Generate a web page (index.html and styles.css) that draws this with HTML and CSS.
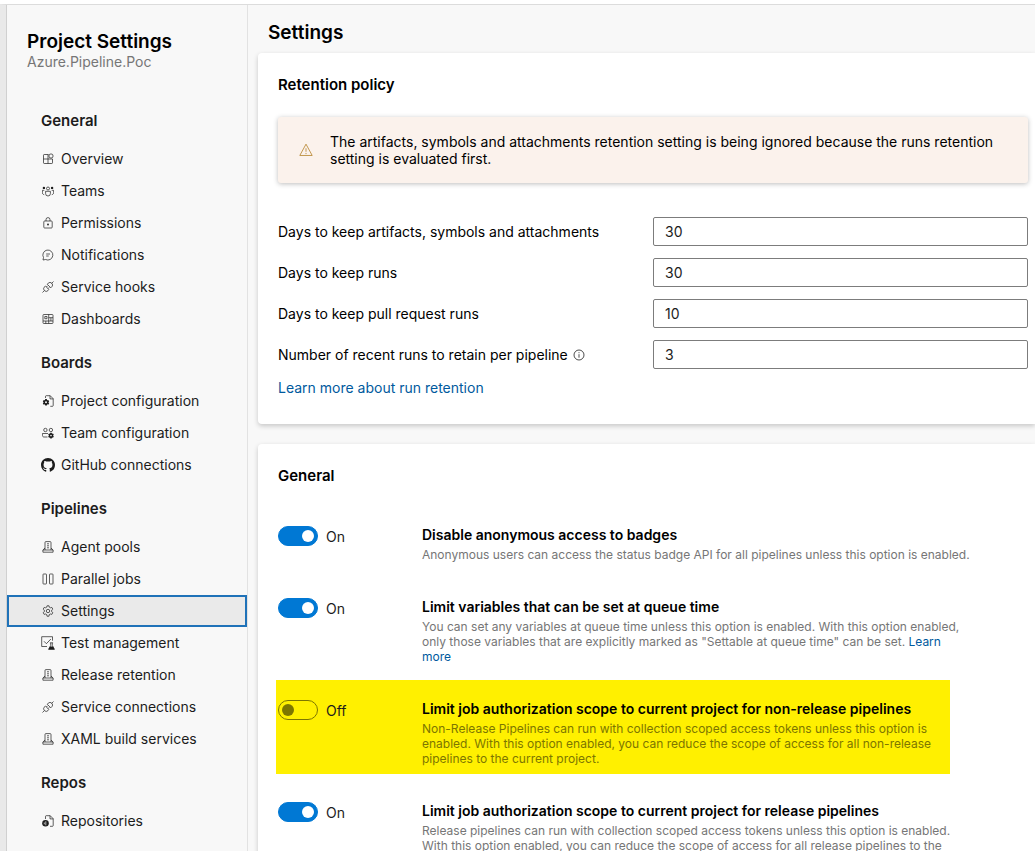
FILE: index.html
```html
<!DOCTYPE html>
<html lang="en">
<head>
<meta charset="utf-8">
<meta name="viewport" content="width=device-width, initial-scale=1">
<title>Project Settings - Azure.Pipeline.Poc</title>
<link rel="stylesheet" href="styles.css">
</head>
<body>
<svg class="sprite" aria-hidden="true">
  <symbol id="overview" viewBox="0 0 12 12"><path d="M6.500 1.500H2.200a.7.7 0 0 0-.7.7v7.600c0 .4.3.7.7.7h7.600a.7.7 0 0 0 .7-.7V6M6 1.500v9M1.500 6h9"/><circle cx="9" cy="3" r="2.100"/></symbol>
  <symbol id="teams" viewBox="0 0 12 12"><circle cx="6" cy="3.500" r="1.500"/><path d="M3.600 6.300h4.800v2.300a2.400 2.400 0 0 1-4.800 0zM2.300 5.300H.4v2.400c0 1 .6 1.800 1.800 2M9.700 5.300h1.900v2.400c0 1-.6 1.800-1.800 2"/><circle class="solid" cx="1.900" cy="2.900" r="1.200"/><circle class="solid" cx="10.100" cy="2.900" r="1.200"/></symbol>
  <symbol id="lock" viewBox="0 0 12 12"><rect x="1.800" y="4" width="8.400" height="7" rx=".8"/><path d="M4 4V2.600a2 2 0 0 1 4 0V4"/><circle class="solid" cx="6" cy="7.500" r=".9"/></symbol>
  <symbol id="chat" viewBox="0 0 12 12"><path d="M1 11l.5-2.500A5 5 0 1 1 3.600 10.500zM4.200 5h3.800M4.200 7h2.500"/></symbol>
  <symbol id="plug" viewBox="0 0 12 12"><path d="M.5 11.500l1.800-1.800M9.700 2.300L11.500.5M3.400 5l3.600 3.600-1 1a2.500 2.500 0 0 1-3.600-3.600zM5.200 3.200l1-1a2.500 2.500 0 0 1 3.600 3.600l-1 1zM4.400 6l1.300-1.300M6 7.600l1.300-1.300"/></symbol>
  <symbol id="dashboard" viewBox="0 0 12 12"><rect x="1" y="1.500" width="10" height="9" rx=".8"/><path d="M6.700 1.500v9M1 8h10M6.700 4.700H11M2.800 3.500h2.200v2.200H2.800zM3.800 8v2.500M8.900 4.700V8"/></symbol>
  <symbol id="file-gear" viewBox="0 0 12 12"><path d="M3.500 3V1.400c0-.4.300-.7.700-.7H8.200l3 3v6.900c0 .4-.3.700-.7.700H8.300M8 .7v3.200h3.200"/><path class="solid" d="M3.200 4.100h1.600l.3 1.200 1.200-.4.900 1.500-.9.900.9.900-.9 1.500-1.200-.4-.3 1.300H3.200l-.3-1.300-1.200.4-.9-1.500.9-.9-.9-.9.900-1.500 1.200.4z"/><circle class="hole" cx="4" cy="7.300" r="1"/></symbol>
  <symbol id="team-gear" viewBox="0 0 12 12"><circle cx="3.400" cy="3" r="1.700"/><circle cx="8.900" cy="3" r="1.700"/><path d="M5.500 10H2C1 10 .4 9.300.4 8.300V6.500H6"/><path class="solid" d="M8.300 5.800h1.400l.3 1 1-.3.800 1.300-.8.800.8.800-.8 1.300-1-.3-.3 1H8.300l-.3-1-1 .3-.8-1.300.8-.8-.8-.8.800-1.300 1 .3z"/><circle class="hole" cx="9" cy="8.600" r=".8"/></symbol>
  <symbol id="github" viewBox="0 0 16 16"><path class="solid" d="M8 0C3.580 0 0 3.580 0 8c0 3.540 2.290 6.530 5.470 7.590.4.070.55-.17.55-.38 0-.19-.01-.82-.01-1.490-2.010.37-2.530-.49-2.690-.94-.09-.23-.48-.94-.82-1.130-.28-.15-.68-.52-.01-.53.63-.01 1.080.58 1.230.82.72 1.210 1.870.87 2.330.66.07-.52.28-.87.51-1.070-1.780-.2-3.640-.89-3.640-3.950 0-.87.31-1.590.82-2.150-.08-.2-.36-1.020.08-2.120 0 0 .67-.21 2.200.82a7.600 7.600 0 0 1 4 0c1.530-1.040 2.200-.82 2.200-.82.44 1.100.16 1.920.08 2.120.51.56.82 1.270.82 2.150 0 3.070-1.870 3.750-3.650 3.950.29.25.54.73.54 1.480 0 1.070-.01 1.930-.01 2.200 0 .21.150.46.55.38A8.010 8.010 0 0 0 16 8c0-4.420-3.580-8-8-8z"/></symbol>
  <symbol id="server" viewBox="0 0 12 12"><path d="M3 9V1.500c0-.6.300-.9.900-.9h4.200c.6 0 .9.300.9.900V9M3 7L.9 9v2.200h10.200V9L9 7M.9 9h10.200M5 2.800h2M5 4.800h2M5 6.800h2"/></symbol>
  <symbol id="parallel" viewBox="0 0 12 12"><rect x="1" y="1" width="3.500" height="10" rx=".6"/><rect x="7.500" y="1" width="3.500" height="10" rx=".6"/></symbol>
  <symbol id="gear" viewBox="0 0 12 12"><path d="M4.700 2.200L5 .8h2l.3 1.400 1.100.6 1.400-.4 1 1.700-1.100 1v1.600l1.100 1-1 1.700-1.400-.4-1.100.6L7 11.200H5l-.3-1.600L3.600 9l-1.400.4-1-1.700 1.100-1V5.100l-1.100-1 1-1.700 1.400.4z"/><circle cx="6" cy="6" r="1.700"/></symbol>
  <symbol id="test" viewBox="0 0 14 14"><path d="M6 10.500H.7V.7h10.800v4M3 5.300l2.400 2.400 4.500-4.700"/><path d="M9.700 7v2.500l-2 3.800h5.600l-2-3.800V7M8.900 6.800h3.200"/><path class="solid" d="M8.900 10.500h3.200l1.600 3.100H7.300z"/></symbol>
  <symbol id="repo" viewBox="0 0 12 12"><path d="M3.500 4V1.400c0-.4.300-.7.700-.7H8.200l3 3v6.900c0 .4-.3.700-.7.700H8M8 .7v3.200h3.200"/><circle class="solid" cx="3.500" cy="8.300" r="3.300"/><path class="line-light" d="M3.800 6.300v4M2.300 7.500v1.800"/></symbol>
  <symbol id="warning" viewBox="0 0 12 12"><path d="M6 1L11.300 10.700H.7zM6 4.500v3M6 8.500v1"/></symbol>
  <symbol id="info" viewBox="0 0 12 12"><circle cx="6" cy="6" r="5"/><path d="M6 5.200v3.500M6 3.200v1"/></symbol>
</svg>

<div class="app">
  <nav class="sidebar" aria-label="Project settings">
    <header class="sidebar-header">
      <h2 class="page-title">Project Settings</h2>
      <p class="project-name">Azure.Pipeline.Poc</p>
    </header>

    <h3 class="nav-heading">General</h3>
    <a class="nav-item" href="#"><svg class="icon"><use href="#overview"/></svg>Overview</a>
    <a class="nav-item" href="#"><svg class="icon"><use href="#teams"/></svg>Teams</a>
    <a class="nav-item" href="#"><svg class="icon"><use href="#lock"/></svg>Permissions</a>
    <a class="nav-item" href="#"><svg class="icon"><use href="#chat"/></svg>Notifications</a>
    <a class="nav-item" href="#"><svg class="icon"><use href="#plug"/></svg>Service hooks</a>
    <a class="nav-item" href="#"><svg class="icon"><use href="#dashboard"/></svg>Dashboards</a>

    <h3 class="nav-heading">Boards</h3>
    <a class="nav-item" href="#"><svg class="icon"><use href="#file-gear"/></svg>Project configuration</a>
    <a class="nav-item" href="#"><svg class="icon"><use href="#team-gear"/></svg>Team configuration</a>
    <a class="nav-item" href="#"><svg class="icon icon-large"><use href="#github"/></svg>GitHub connections</a>

    <h3 class="nav-heading">Pipelines</h3>
    <a class="nav-item" href="#"><svg class="icon"><use href="#server"/></svg>Agent pools</a>
    <a class="nav-item" href="#"><svg class="icon"><use href="#parallel"/></svg>Parallel jobs</a>
    <a class="nav-item selected" href="#" aria-current="page"><svg class="icon"><use href="#gear"/></svg>Settings</a>
    <a class="nav-item" href="#"><svg class="icon icon-large"><use href="#test"/></svg>Test management</a>
    <a class="nav-item" href="#"><svg class="icon"><use href="#server"/></svg>Release retention</a>
    <a class="nav-item" href="#"><svg class="icon"><use href="#plug"/></svg>Service connections</a>
    <a class="nav-item" href="#"><svg class="icon"><use href="#server"/></svg>XAML build services</a>

    <h3 class="nav-heading">Repos</h3>
    <a class="nav-item" href="#"><svg class="icon"><use href="#repo"/></svg>Repositories</a>
  </nav>

  <main class="content">
    <h1 class="page-title content-title">Settings</h1>

    <section class="card">
      <h2 class="card-title">Retention policy</h2>
      <div class="alert" role="alert">
        <svg class="icon alert-icon"><use href="#warning"/></svg>
        <p class="alert-text">The artifacts, symbols and attachments retention setting is being ignored because the runs retention setting is evaluated first.</p>
      </div>
      <form class="fields">
        <label for="keep-artifacts">Days to keep artifacts, symbols and attachments</label>
        <input class="field-input" id="keep-artifacts" type="text" value="30">
        <label for="keep-runs">Days to keep runs</label>
        <input class="field-input" id="keep-runs" type="text" value="30">
        <label for="keep-pr">Days to keep pull request runs</label>
        <input class="field-input" id="keep-pr" type="text" value="10">
        <label class="label-info" for="recent-runs">Number of recent runs to retain per pipeline <svg class="icon"><use href="#info"/></svg></label>
        <input class="field-input" id="recent-runs" type="text" value="3">
      </form>
      <a class="link card-link" href="#">Learn more about run retention</a>
    </section>

    <section class="card">
      <h2 class="card-title">General</h2>
      <div class="options">
        <div class="option">
          <div class="toggle-cell"><input class="toggle" id="opt-badges" type="checkbox" role="switch" checked aria-describedby="t-badges"><label class="toggle-label" for="opt-badges">On</label></div>
          <div>
            <h3 class="option-title" id="t-badges">Disable anonymous access to badges</h3>
            <p class="option-text">Anonymous users can access the status badge API for all pipelines unless this option is enabled.</p>
          </div>
        </div>
        <div class="option">
          <div class="toggle-cell"><input class="toggle" id="opt-vars" type="checkbox" role="switch" checked aria-describedby="t-vars"><label class="toggle-label" for="opt-vars">On</label></div>
          <div>
            <h3 class="option-title" id="t-vars">Limit variables that can be set at queue time</h3>
            <p class="option-text">You can set any variables at queue time unless this option is enabled. With this option enabled, only those variables that are explicitly marked as "Settable at queue time" can be set. <a class="link" href="#">Learn more</a></p>
          </div>
        </div>
        <div class="option highlighted">
          <div class="toggle-cell"><input class="toggle" id="opt-nonrelease" type="checkbox" role="switch" aria-describedby="t-nonrelease"><label class="toggle-label" for="opt-nonrelease">Off</label></div>
          <div>
            <h3 class="option-title" id="t-nonrelease">Limit job authorization scope to current project for non-release pipelines</h3>
            <p class="option-text">Non-Release Pipelines can run with collection scoped access tokens unless this option is enabled. With this option enabled, you can reduce the scope of access for all non-release pipelines to the current project.</p>
          </div>
        </div>
        <div class="option">
          <div class="toggle-cell"><input class="toggle" id="opt-release" type="checkbox" role="switch" checked aria-describedby="t-release"><label class="toggle-label" for="opt-release">On</label></div>
          <div>
            <h3 class="option-title" id="t-release">Limit job authorization scope to current project for release pipelines</h3>
            <p class="option-text">Release pipelines can run with collection scoped access tokens unless this option is enabled. With this option enabled, you can reduce the scope of access for all release pipelines to the current project.</p>
          </div>
        </div>
      </div>
    </section>
  </main>
</div>
</body>
</html>
```
FILE: styles.css
```css
* {
  box-sizing: border-box;
}

body,
h1,
h2,
h3,
p {
  margin: 0;
}

body {
  height: 100vh;
  padding-top: 4px;
  overflow: hidden;
  background: #fff;
  color: #000;
  font: 14px/20px Inter, "Liberation Sans", sans-serif;
}

.sprite {
  position: absolute;
  width: 0;
  height: 0;
}

.app {
  display: flex;
  height: 100%;
  border-top: 1px solid #dcdcdc;
  border-left: 6px solid #e9e9e9;
  background: #f8f8f8;
}

.sidebar {
  flex: none;
  width: 242px;
  overflow: hidden;
  border-left: 1px solid #d0d0d0;
  border-right: 1px solid #e2e2e2;
}

.sidebar-header {
  padding: 24px 20px 34px;
}

.page-title {
  font-size: 19px;
  font-weight: 600;
  line-height: 25px;
}

.project-name {
  line-height: 16px;
  color: #767676;
}

.nav-heading {
  margin: 12px 0 6px;
  padding-left: 34px;
  font-size: 15px;
  font-weight: 600;
  line-height: 32px;
  color: #1c1c1c;
}

.sidebar-header + .nav-heading {
  margin-top: 1px;
}

.nav-item {
  display: flex;
  align-items: center;
  gap: 6px;
  height: 32px;
  padding-left: 34px;
  color: #1c1c1c;
  text-decoration: none;
}

.nav-item.selected {
  padding-left: 32px;
  border: 2px solid #1f72b8;
  background: #eaeaea;
}

.icon {
  flex: none;
  width: 12px;
  height: 12px;
  margin: 0 1px;
  fill: none;
  stroke: currentColor;
  stroke-width: 0.7;
}

.icon-large {
  width: 14px;
  height: 14px;
  margin: 0;
}

.solid {
  fill: currentColor;
  stroke: none;
}

.hole {
  fill: #f8f8f8;
  stroke: none;
}

.line-light {
  stroke: #f8f8f8;
}

.content {
  flex: 1;
  min-width: 0;
  overflow: hidden;
  padding-left: 10px;
}

.content-title {
  padding: 15px 10px 8px;
}

.card {
  margin-bottom: 20px;
  padding: 20px 0 26px 20px;
  border-radius: 4px 0 0 4px;
  background: #fff;
  box-shadow: 0 2px 5px rgba(0, 0, 0, 0.2);
}

.card-title {
  font-size: 15px;
  font-weight: 600;
  line-height: 24px;
}

.alert {
  display: flex;
  align-items: center;
  gap: 16px;
  max-width: 750px;
  margin: 20px 0 34px;
  padding: 16px 20px;
  border-radius: 3px;
  background: #fbf2ec;
  box-shadow: 0 1px 5px rgba(0, 0, 0, 0.26);
}

.alert-icon {
  width: 14px;
  height: 14px;
  color: #b5832c;
}

.alert-text {
  line-height: 17px;
}

.fields {
  display: grid;
  grid-template-columns: 1fr 1fr;
  align-items: center;
  gap: 12px 0;
  max-width: 750px;
}

.label-info {
  display: flex;
  align-items: center;
  gap: 4px;
}

.field-input {
  width: 100%;
  height: 29px;
  padding: 0 11px;
  border: 1px solid #7c7c7c;
  border-radius: 2px;
  background: #fff;
  color: #1c1c1c;
  font: inherit;
}

.link {
  color: #005a9e;
  text-decoration: none;
}

.card-link {
  display: block;
  margin-top: 9px;
}

.options {
  display: grid;
  gap: 8px;
  margin: 18px 0 0 -2px;
}

.option {
  display: grid;
  grid-template-columns: 144px minmax(0, 550px);
  padding: 19px 2px 8px;
}

.highlighted {
  max-width: 674px;
  background: #fff000;
}

.toggle-cell {
  display: flex;
  align-items: flex-start;
  gap: 8px;
  padding-top: 1px;
  color: #1c1c1c;
}

.toggle-label {
  line-height: 22px;
}

.toggle {
  display: flex;
  align-items: center;
  flex: none;
  width: 40px;
  height: 20px;
  margin: 0;
  padding: 0 3px;
  appearance: none;
  border: 1px solid #7d7600;
  border-radius: 10px;
}

.toggle::before {
  content: "";
  width: 12px;
  height: 12px;
  border-radius: 50%;
  background: #7d7600;
}

.toggle:checked {
  justify-content: flex-end;
  border-color: #0078d4;
  background: #0078d4;
}

.toggle:checked::before {
  background: #fff;
}

.option-title {
  margin-bottom: 2px;
  font-size: 14px;
  font-weight: 600;
  line-height: 20px;
}

.option-text {
  font-size: 12px;
  line-height: 15px;
  color: #767676;
}

.highlighted .option-text {
  color: #7d7600;
}
```
